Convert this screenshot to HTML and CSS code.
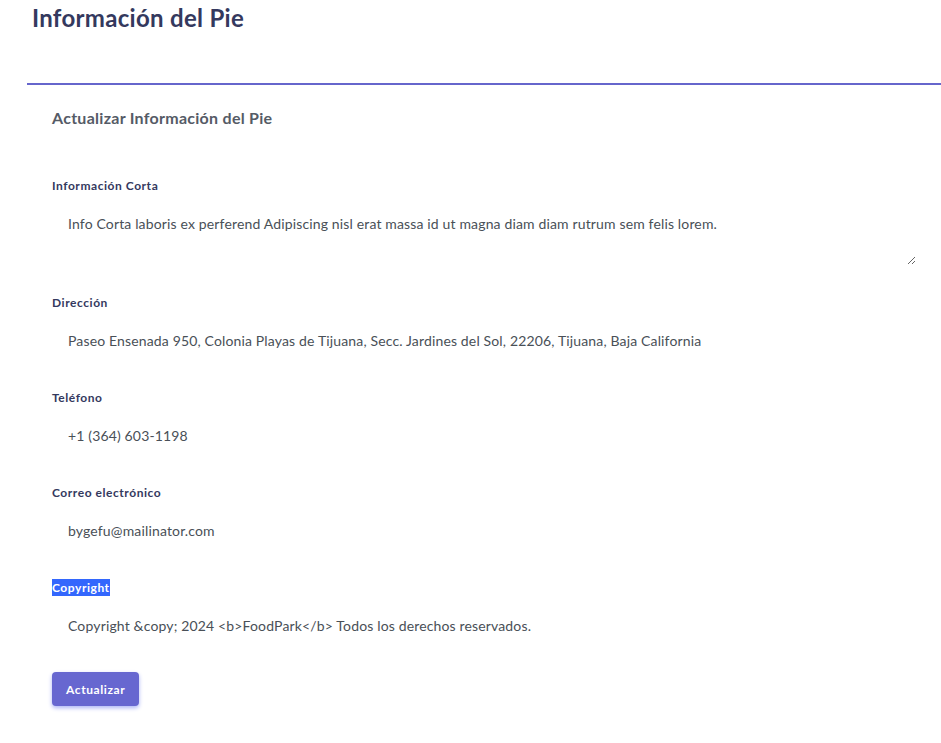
FILE: index.html
```html
<!DOCTYPE html>
<html lang="es">
<head>
<meta charset="utf-8">
<title>Información del Pie</title>
<link rel="stylesheet" href="styles.css">
</head>
<body>
<div class="page">
  <div class="section-header">
    <h1>Información del Pie</h1>
  </div>
  <div class="card">
    <div class="card-header">
      <h4>Actualizar Información del Pie</h4>
    </div>
    <div class="card-body">
      <form class="form">
        <div class="form-group">
          <label class="label" for="f1">Información Corta</label>
          <textarea id="f1" class="control textarea">Info Corta laboris ex perferend Adipiscing nisl erat massa id ut magna diam diam rutrum sem felis lorem.</textarea>
        </div>
        <div class="form-group">
          <label class="label" for="f2">Dirección</label>
          <input id="f2" class="control" type="text" value="Paseo Ensenada 950, Colonia Playas de Tijuana, Secc. Jardines del Sol, 22206, Tijuana, Baja California">
        </div>
        <div class="form-group">
          <label class="label" for="f3">Teléfono</label>
          <input id="f3" class="control" type="text" value="+1 (364) 603-1198">
        </div>
        <div class="form-group">
          <label class="label" for="f4">Correo electrónico</label>
          <input id="f4" class="control" type="text" value="bygefu@mailinator.com">
        </div>
        <div class="form-group last">
          <label class="label" for="f5"><span class="selected">Copyright</span></label>
          <input id="f5" class="control" type="text" value="Copyright &amp;copy; 2024 &lt;b&gt;FoodPark&lt;/b&gt; Todos los derechos reservados.">
        </div>
        <button type="button" class="btn">Actualizar</button>
      </form>
    </div>
  </div>
</div>
</body>
</html>
```

FILE: styles.css
```css
* { box-sizing: border-box; }
html, body { margin: 0; padding: 0; background: #fff; overflow: hidden; }
body {
  font-family: "Lato", "Open Sans", sans-serif;
  color: #495057;
  width: 941px;
  height: 743px;
}
.page { padding-top: 2px; }
.section-header { padding: 0 0 0 32px; height: 81px; }
.section-header h1 {
  margin: 0;
  font-size: 24px;
  line-height: 32px;
  font-weight: 700;
  color: #34395e;
  letter-spacing: 0.3px;
}
.card {
  margin-left: 27px;
  border-top: 2px solid #6666cc;
  background: #fff;
}
.card-header {
  min-height: 70px;
  padding: 12px 25px 18px;
  display: flex;
  align-items: center;
}
.card-header h4 {
  margin: 0;
  font-size: 16px;
  font-weight: 700;
  color: #555b66;
  letter-spacing: 0.27px;
}
.card-body { padding: 22px 25px 20px; }
.form-group { margin-bottom: 29px; }
.form-group.last { margin-bottom: 27px; }
.label {
  display: block;
  font-size: 12px;
  line-height: 18px;
  font-weight: 700;
  color: #34395e;
  margin-bottom: 8px;
  letter-spacing: 0.55px;
}
.selected { background: #3367fd; color: #fff; padding: 1px 0; }
.control {
  display: block;
  width: 100%;
  height: 40px;
  padding: 9px 16px;
  border: none;
  outline: none;
  background: #fff;
  font-family: inherit;
  font-size: 14px;
  line-height: 21px;
  letter-spacing: 0.15px;
  color: #495057;
}
.textarea { height: 62px; padding-top: 10px; resize: vertical; }
.btn {
  display: block;
  border: none;
  background: #6767d0;
  color: #fff;
  font-family: inherit;
  font-size: 12px;
  font-weight: 700;
  letter-spacing: 0.6px;
  height: 34px;
  padding: 0 14px;
  border-radius: 4px;
  box-shadow: 0 2px 4px #acb5f6;
}
```
